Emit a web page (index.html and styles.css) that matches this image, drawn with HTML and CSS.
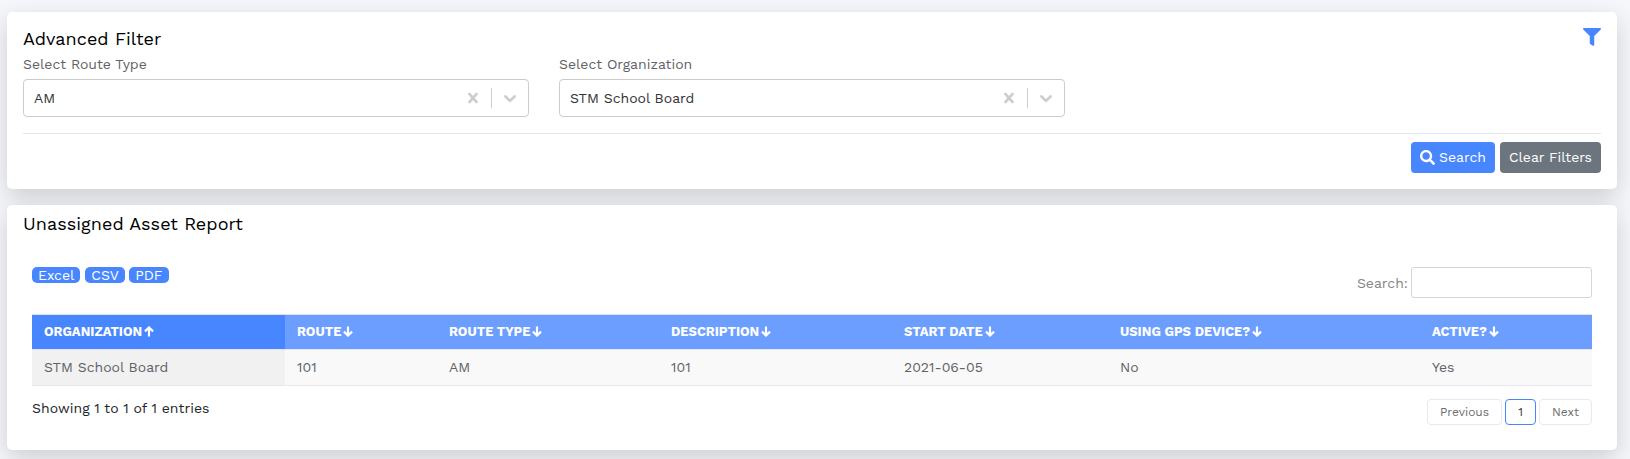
FILE: index.html
```
<!DOCTYPE html>
<html lang="en">
<head>
<meta charset="utf-8">
<title>Unassigned Asset Report</title>
<link rel="stylesheet" href="styles.css">
</head>
<body>
<svg width="0" height="0" class="sprite" aria-hidden="true">
  <symbol id="i-clear" viewBox="0 0 20 20"><path d="M14.348 14.849c-0.469 0.469-1.229 0.469-1.697 0l-2.651-3.030-2.651 3.029c-0.469 0.469-1.229 0.469-1.697 0-0.469-0.469-0.469-1.229 0-1.697l2.758-3.15-2.759-3.152c-0.469-0.469-0.469-1.228 0-1.697s1.228-0.469 1.697 0l2.652 3.031 2.651-3.031c0.469-0.469 1.228-0.469 1.697 0s0.469 1.229 0 1.697l-2.758 3.152 2.758 3.15c0.469 0.469 0.469 1.229 0 1.698z"/></symbol>
  <symbol id="i-chevron" viewBox="0 0 20 20"><path d="M4.516 7.548c0.436-0.446 1.043-0.481 1.576 0l3.908 3.747 3.908-3.747c0.533-0.481 1.141-0.446 1.574 0 0.436 0.445 0.408 1.197 0 1.615-0.406 0.418-4.695 4.502-4.695 4.502-0.217 0.223-0.502 0.335-0.787 0.335s-0.57-0.112-0.789-0.335c0 0-4.287-4.084-4.695-4.502s-0.436-1.17 0-1.615z"/></symbol>
  <symbol id="i-down" viewBox="0 0 10 11"><path d="M5 0.4V9.4M0.9 5.6L5 9.5L9.1 5.6" fill="none" stroke="currentColor" stroke-width="2.2"/></symbol>
  <symbol id="i-up" viewBox="0 0 10 11"><path d="M5 10.6V1.6M0.9 5.4L5 1.5L9.1 5.4" fill="none" stroke="currentColor" stroke-width="2.2"/></symbol>
</svg>
<section class="card filter">
  <div class="filter-head">
    <h4>Advanced Filter</h4>
    <svg class="funnel" viewBox="0 0 512 512"><path d="M487.976 0H24.028C2.71 0-8.047 25.866 7.058 40.971L192 225.941V432c0 7.831 3.821 15.17 10.237 19.662l80 55.98C298.02 518.69 320 507.493 320 487.98V225.941l184.947-184.97C520.021 25.896 509.338 0 487.976 0z"/></svg>
  </div>
  <div class="fields">
    <div class="field">
      <label>Select Route Type</label>
      <div class="select"><span>AM</span><i><svg><use href="#i-clear"/></svg></i><b></b><i><svg><use href="#i-chevron"/></svg></i></div>
    </div>
    <div class="field">
      <label>Select Organization</label>
      <div class="select"><span>STM School Board</span><i><svg><use href="#i-clear"/></svg></i><b></b><i><svg><use href="#i-chevron"/></svg></i></div>
    </div>
  </div>
  <div class="actions">
    <button class="btn primary"><svg viewBox="0 0 512 512"><path d="M505 442.7L405.3 343c-4.5-4.5-10.6-7-17-7H372c27.6-35.3 44-79.7 44-128C416 93.1 322.9 0 208 0S0 93.1 0 208s93.1 208 208 208c48.300 0 92.700-16.400 128-44v16.300c0 6.400 2.500 12.500 7 17l99.700 99.700c9.400 9.400 24.600 9.400 33.900 0l28.300-28.300c9.400-9.400 9.400-24.600.1-34zM208 336c-70.700 0-128-57.200-128-128 0-70.700 57.200-128 128-128 70.700 0 128 57.200 128 128 0 70.700-57.200 128-128 128z"/></svg>Search</button>
    <button class="btn secondary">Clear Filters</button>
  </div>
</section>
<section class="card report">
  <h4>Unassigned Asset Report</h4>
  <div class="tools">
    <div class="exports"><span>Excel</span><span>CSV</span><span>PDF</span></div>
    <label class="search"><span>Search:</span><input type="text"></label>
  </div>
  <table>
    <colgroup><col class="c1"><col class="c2"><col class="c3"><col class="c4"><col class="c5"><col class="c6"><col></colgroup>
    <thead><tr>
      <th class="sorted">ORGANIZATION<svg><use href="#i-up"/></svg></th>
      <th>ROUTE<svg><use href="#i-down"/></svg></th>
      <th>ROUTE TYPE<svg><use href="#i-down"/></svg></th>
      <th>DESCRIPTION<svg><use href="#i-down"/></svg></th>
      <th>START DATE<svg><use href="#i-down"/></svg></th>
      <th>USING GPS DEVICE?<svg><use href="#i-down"/></svg></th>
      <th>ACTIVE?<svg><use href="#i-down"/></svg></th>
    </tr></thead>
    <tbody><tr><td class="sorted">STM School Board</td><td>101</td><td>AM</td><td>101</td><td>2021-06-05</td><td>No</td><td>Yes</td></tr></tbody>
  </table>
  <div class="foot">
    <div class="info">Showing 1 to 1 of 1 entries</div>
    <div class="pages"><a class="prev">Previous</a><a class="current">1</a><a class="next">Next</a></div>
  </div>
</section>
</body>
</html>
```
FILE: styles.css
```
* { box-sizing: border-box; }
body {
  margin: 0;
  padding: 12px 13px 0 7px;
  height: 459px;
  overflow: hidden;
  background: #f5f7fb;
  color: #212529;
  font: 14px/21px "Work Sans", Inter, sans-serif;
}
.sprite { display: block; }
.card {
  background: #fff;
  border-radius: 5px;
  box-shadow: 0 8px 24px rgba(0, 0, 0, .17);
}
h4 { margin: 0; font-size: 18px; font-weight: 400; line-height: 22px; letter-spacing: .06px; color: #000; }

.filter { height: 177px; margin-bottom: 16px; padding: 16px; }
.filter-head { display: flex; justify-content: space-between; height: 25px; }
.funnel { width: 18px; height: 18px; fill: #4886ff; }
.fields { display: flex; gap: 30px; height: 81px; border-bottom: 1px solid #e1e6ee; }
.field { width: 506px; }
.field label { display: block; height: 26px; line-height: 22px; color: #5f6368; }
.select {
  display: flex;
  align-items: center;
  height: 38px;
  padding-left: 10px;
  border: 1px solid #ccc;
  border-radius: 4px;
  color: #333;
}
.select span { flex: 1; }
.select i { padding: 8px; height: 36px; }
.select b { width: 1px; height: 20px; background: #ccc; }
.select svg { display: block; width: 20px; height: 20px; fill: #ccc; stroke: #ccc; stroke-width: .4px; }
.actions { display: flex; justify-content: flex-end; gap: 5px; padding-top: 8px; }
.btn {
  display: flex;
  align-items: center;
  height: 31px;
  padding: 0 9px;
  border: 0;
  border-radius: 4px;
  color: #fff;
  font: 14px/21px "Work Sans", Inter, sans-serif;
}
.btn svg { width: 15px; height: 15px; margin-right: 4px; fill: #fff; }
.primary { background: #4886ff; }
.secondary { background: #6c757d; }

.report { height: 245px; padding: 8px 25px 0; }
.report h4 { margin-left: -9px; }
.tools { display: flex; justify-content: space-between; align-items: flex-start; height: 79px; padding-top: 32px; }
.exports { display: flex; gap: 5px; }
.exports span {
  height: 16px;
  padding: 0 6px;
  border-radius: 5px;
  background: #4886ff;
  color: #fff;
  line-height: 16px;
}
.exports span + span + span { width: 40px; margin-left: -1px; text-align: center; }
.search { display: flex; align-items: center; gap: 3px; color: #868686; }
.search span { padding-top: 2px; }
.search input { width: 181px; height: 31px; padding: 0; border: 1px solid #d6d6d6; border-radius: 3px; background: #fff; }
table { width: 100%; table-layout: fixed; border-collapse: separate; border-spacing: 0; border-top: 1px solid #dee2e6; }
.c1 { width: 253px; }
.c2 { width: 152px; }
.c3 { width: 222px; }
.c4 { width: 233px; }
.c5 { width: 216px; }
.c6 { width: 312px; }
th, td { padding: 0 12px; text-align: left; }
th {
  height: 35px;
  padding-bottom: 2px;
  border-bottom: 1px solid #e4e8ee;
  background: #6c9eff;
  color: #fff;
  font-size: 13px;
  font-weight: 700;
}
th.sorted { background: #4886ff; }
th svg { width: 10px; height: 11px; margin-left: 2px; vertical-align: -1px; }
td { height: 36px; border-bottom: 1px solid #e6e7ec; background: #f9f9f9; color: #5f6368; }
td.sorted { background: #f1f1f1; }
.foot { display: flex; justify-content: space-between; padding-top: 13px; }
.info { line-height: 18px; letter-spacing: .05px; }
.pages { display: flex; gap: 3px; }
.pages a {
  height: 26px;
  border: 1px solid #e8e9f2;
  border-radius: 4px;
  color: #6c6c70;
  font-size: 12px;
  line-height: 24px;
  text-align: center;
}
.pages .prev { width: 75px; }
.pages .current { width: 31px; border-color: #4886ff; color: #333; }
.pages .next { width: 53px; }
```
